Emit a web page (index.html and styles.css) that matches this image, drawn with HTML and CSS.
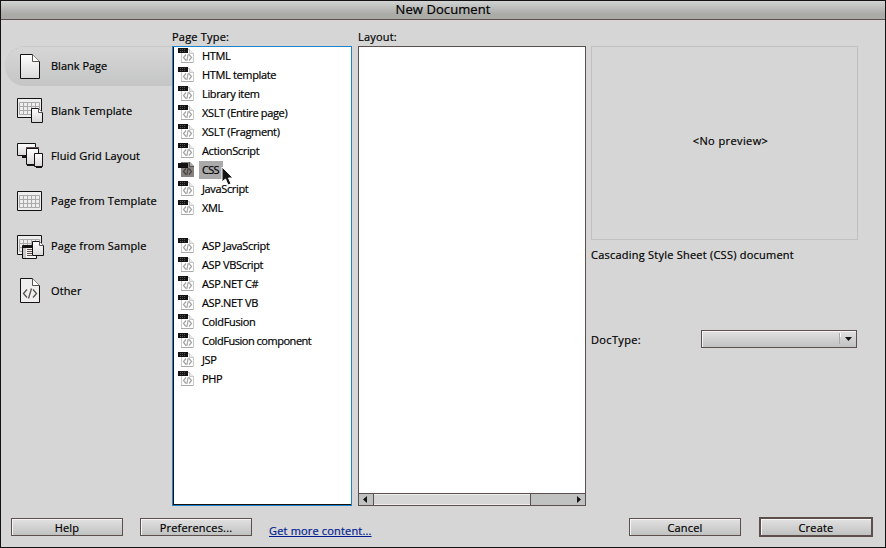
FILE: index.html
```
<!DOCTYPE html>
<html lang="en">
<head>
<meta charset="utf-8">
<title>New Document</title>
<link rel="stylesheet" href="styles.css">
</head>
<body>
<svg class="defs" width="0" height="0" aria-hidden="true">
  <defs>
    <linearGradient id="paper" x1="0" y1="0" x2="0" y2="1"><stop offset="0" stop-color="#fff"/><stop offset="1" stop-color="#d8d8d8"/></linearGradient>
    <symbol id="sheet" viewBox="0 0 12 15"><path d="M.5.5h7l4 4v10H.5z" fill="url(#paper)" stroke="#151214"/><path d="M7.5.5v4h4" fill="#fff" stroke="#5d504c"/></symbol>
    <symbol id="table" viewBox="0 0 26 21"><path d="M.5.5h24v19H.5z" fill="#eee" stroke="#151214"/><path d="M2.500 4.500h20v12h-20zM2.500 8.500h20M2.500 12.500h20M6.500 4.500v12M10.500 4.500v12M14.500 4.500v12M18.500 4.500v12" fill="none" stroke="#aaa"/></symbol>
    <symbol id="file" viewBox="0 0 17 16">
      <path d="M3.500 1.500h8l4 4v9h-12z" fill="#fff" stroke="#c8cac9"/><path d="M11.500 1v4.500H16" fill="#e8e8e8" stroke="#c8cac9"/>
      <path d="M3 14.500h12" stroke="#aaa"/>
      <path d="M8 6.500 5.500 9.500 8 12.500M11 6.500l2.500 3-2.500 3M10.200 6l-1.400 7" fill="none" stroke="#a3a3a3" stroke-width="1.200"/>
      <path d="M0 0h10v5H0z" fill="#151214"/><path d="M2 1.500h6M2 3.500h6" stroke="#555" stroke-dasharray="1 1"/>
    </symbol>
    <symbol id="file-on" viewBox="0 0 17 16">
      <path d="M3 0h9l4 4v11H3z" fill="#858280"/><path d="M11.500 0v4.500H16" fill="#aaa" stroke="#5d504c"/>
      <path d="M8 6.500 5.500 9.500 8 12.500M11 6.500l2.500 3-2.500 3M10.200 6l-1.400 7" fill="none" stroke="#4b4240" stroke-width="1.200"/>
      <path d="M0 1h10v5H0z" fill="#151214"/>
    </symbol>
  </defs>
</svg>
<div class="dialog">
  <header class="titlebar">New Document</header>
  <main class="content">
    <nav class="sidebar">
      <div class="category active"><svg class="cat-icon" viewBox="0 0 30 30"><path d="M4.500 2.500h12l7 7v17h-19z" fill="url(#paper)" stroke="#151214"/><path d="M16.500 2.500v7h7" fill="#fff" stroke="#5d504c"/></svg><span>Blank Page</span></div>
      <div class="category"><svg class="cat-icon" viewBox="0 0 30 30"><use href="#table" x="1" y="2" width="26" height="21"/><use href="#sheet" x="15" y="12" width="12" height="15"/></svg><span>Blank Template</span></div>
      <div class="category"><svg class="cat-icon" viewBox="0 0 30 30"><path d="M1.500 2.500h18v12h-18z" fill="url(#paper)" stroke="#151214"/><path d="M6 16h5" stroke="#151214" stroke-width="2"/><path d="M10.500 7.500h12v16h-12z" fill="url(#paper)" stroke="#151214"/><path d="M10 6.500h13" stroke="#5d504c"/><path d="M11 24.500h9" stroke="#151214"/><path d="M18.500 12.500h8v13h-8z" fill="url(#paper)" stroke="#151214"/><path d="M20 26.500h6" stroke="#151214"/></svg><span>Fluid Grid Layout</span></div>
      <div class="category"><svg class="cat-icon" viewBox="0 0 30 30"><use href="#table" x="1" y="5" width="26" height="21"/></svg><span>Page from Template</span></div>
      <div class="category"><svg class="cat-icon" viewBox="0 0 30 30"><use href="#table" x="1" y="4" width="26" height="21"/><path d="M6.500 14.500h14v13h-14z" fill="#f4f4f4" stroke="#151214"/><path d="M7 15h13v2H7z" fill="#151214"/><path d="M7 17h3v10H7z" fill="#c8cac9"/><path d="M11 18.500h5M11 20.500h5M11 22.500h5M11 24.500h5" stroke="#5d504c"/><use href="#sheet" x="16" y="10" width="12" height="15"/></svg><span>Page from Sample</span></div>
      <div class="category"><svg class="cat-icon" viewBox="0 0 30 30"><path d="M4.500 2.500h12l7 7v17h-19z" fill="#efefef" stroke="#151214"/><path d="M16.500 2.500v7h7" fill="#fff" stroke="#5d504c"/><path d="M11 13.500 7.500 17.500l3.500 4M17 13.500l3.500 4-3.500 4M15.500 12.500l-3 10" fill="none" stroke="#5d504c" stroke-width="1.300"/></svg><span>Other</span></div>
    </nav>
    <section class="types">
      <h2 class="label">Page Type:</h2>
      <ul class="list">
        <li><svg class="file"><use href="#file"/></svg><span>HTML</span></li>
        <li><svg class="file"><use href="#file"/></svg><span>HTML template</span></li>
        <li><svg class="file"><use href="#file"/></svg><span>Library item</span></li>
        <li><svg class="file"><use href="#file"/></svg><span>XSLT (Entire page)</span></li>
        <li><svg class="file"><use href="#file"/></svg><span>XSLT (Fragment)</span></li>
        <li><svg class="file"><use href="#file"/></svg><span>ActionScript</span></li>
        <li class="selected"><svg class="file"><use href="#file-on"/></svg><span>CSS</span>
          <svg class="cursor" viewBox="0 0 14 20"><path d="M1 1v15l3.500-3 2.500 6 3-1.200L7.500 12H12z" fill="#151214" stroke="#fff"/></svg></li>
        <li><svg class="file"><use href="#file"/></svg><span>JavaScript</span></li>
        <li><svg class="file"><use href="#file"/></svg><span>XML</span></li>
        <li class="blank"></li>
        <li><svg class="file"><use href="#file"/></svg><span>ASP JavaScript</span></li>
        <li><svg class="file"><use href="#file"/></svg><span>ASP VBScript</span></li>
        <li><svg class="file"><use href="#file"/></svg><span>ASP.NET C#</span></li>
        <li><svg class="file"><use href="#file"/></svg><span>ASP.NET VB</span></li>
        <li><svg class="file"><use href="#file"/></svg><span>ColdFusion</span></li>
        <li><svg class="file"><use href="#file"/></svg><span class="tight">ColdFusion component</span></li>
        <li><svg class="file"><use href="#file"/></svg><span>JSP</span></li>
        <li><svg class="file"><use href="#file"/></svg><span>PHP</span></li>
      </ul>
    </section>
    <section class="layouts">
      <h2 class="label">Layout:</h2>
      <div class="layout-box">
        <div class="layout-area"></div>
        <div class="scrollbar">
          <svg class="arrow" viewBox="0 0 14 11"><path d="M4 5.500 8 2v7z" fill="#151214"/></svg>
          <div class="thumb"></div>
          <div class="track"><svg class="arrow" viewBox="0 0 14 11"><path d="M10 5.500 6 2v7z" fill="#151214"/></svg></div>
        </div>
      </div>
    </section>
    <section class="details">
      <div class="preview"><span>&lt;No preview&gt;</span></div>
      <p class="description">Cascading Style Sheet (CSS) document</p>
      <div class="doctype"><span>DocType:</span><div class="select"><svg class="caret" viewBox="0 0 17 16"><path d="M.5 2v11" stroke="#aaa"/><path d="M1.500 2v4" stroke="#fff"/><path d="M6 6h7L9.500 10z" fill="#151214"/></svg></div></div>
    </section>
  </main>
  <footer class="footer">
    <button class="button">Help</button>
    <button class="button prefs">Preferences...</button>
    <a class="more">Get more content...</a>
    <button class="button cancel">Cancel</button>
    <button class="button default">Create</button>
  </footer>
</div>
</body>
</html>
```
FILE: styles.css
```
* { box-sizing: border-box; }
body { margin: 0; font: 11px/16px "Open Sans", "Noto Sans", sans-serif; color: #000; -webkit-text-stroke: .2px; }
.defs { position: absolute; }
.dialog { width: 886px; height: 548px; border: 1px solid #151214; background: #d6d6d6; display: flex; flex-direction: column; overflow: hidden; }
.titlebar { height: 19px; flex: none; border-bottom: 1px solid #5d504c; background: linear-gradient(#d2d3d3, #c6c8c7 20%, #aaaaa6 75%); text-align: center; font-size: 13px; line-height: 17px; letter-spacing: .08px; }
.content { display: grid; grid-template-columns: 171px 180px 228px 267px; column-gap: 0; height: 486px; flex: none; }
.sidebar { padding: 26px 0 0 4px; display: flex; flex-direction: column; gap: 5px; }
.category { height: 40px; display: flex; align-items: center; padding-left: 11px; gap: 5px; white-space: nowrap; }
.category.active { background: linear-gradient(#d6d6d6, #c4c6c5); border-top: 1px dashed #c8cac9; border-radius: 20px 0 0 20px; }
.cat-icon { width: 30px; height: 30px; flex: none; }
.category span { letter-spacing: .12px; }
.category.active span { letter-spacing: 0; padding-bottom: 1px; }
.label { margin: 0; height: 26px; padding-top: 9px; font-size: 11px; font-weight: 400; white-space: nowrap; letter-spacing: .2px; }
.list { list-style: none; margin: 0; padding: 0; height: 460px; border: 1px solid #2082c8; background: #fff; box-shadow: inset 1px 0 #151214, inset 0 -1px #151214; }
.list li { height: 19px; display: flex; align-items: center; padding: 0 0 1px 5px; white-space: nowrap; position: relative; }
.file { width: 17px; height: 16px; flex: none; margin-right: 4px; }
.list span { padding: 1px 3px; letter-spacing: -.35px; }
.list .tight { letter-spacing: -.47px; }
.list .selected span { background: #aaa; letter-spacing: -.7px; padding-right: 4px; }
.cursor { position: absolute; left: 48px; top: 5px; width: 14px; height: 20px; z-index: 1; }
.layouts { margin-left: 6px; width: 228px; }
.layout-box { height: 460px; border: 1px solid #5d504c; background: #fff; display: flex; flex-direction: column; }
.layout-area { flex: 1; }
.scrollbar { height: 12px; border-top: 1px solid #5d504c; display: flex; background: #c0c2c1; }
.arrow { width: 14px; height: 11px; flex: none; }
.thumb { width: 158px; border: 1px solid #5d504c; border-width: 0 1px; background: #d6d6d6; box-shadow: inset 0 1px #eee, inset 0 -1px #eee; }
.track { flex: 1; display: flex; justify-content: flex-end; }
.details { margin-left: 11px; padding-top: 26px; width: 267px; }
.preview { height: 194px; border: 1px solid #bfc1c0; display: grid; place-items: center; padding-bottom: 4px; padding-left: 12px; letter-spacing: .4px; }
.description { margin: 7px 0 0; white-space: nowrap; letter-spacing: .23px; }
.doctype { margin-top: 67px; display: flex; align-items: center; justify-content: space-between; width: 266px; letter-spacing: .35px; }
.doctype span { padding-top: 2px; }
.select { width: 156px; height: 18px; }
.select, .button { border: 1px solid #5d504c; background: linear-gradient(#e2e2e2, #d6d6d6 35%, #c0c2c1); box-shadow: inset 1px 1px #f5f5f5; }
.select { display: flex; justify-content: flex-end; }
.caret { width: 17px; height: 16px; }
.footer { display: flex; align-items: center; height: 42px; flex: none; padding: 0 12px 0 10px; }
.button { width: 112px; height: 18px; padding: 0; font: inherit; color: inherit; line-height: 15px; letter-spacing: .2px; }
.prefs { margin-left: 17px; }
.more { margin: 8px auto 0 17px; color: #001b91; text-decoration: underline; white-space: nowrap; letter-spacing: .17px; }
.cancel { margin-right: 18px; }
.default { width: 114px; height: 20px; border-width: 2px; }
```
